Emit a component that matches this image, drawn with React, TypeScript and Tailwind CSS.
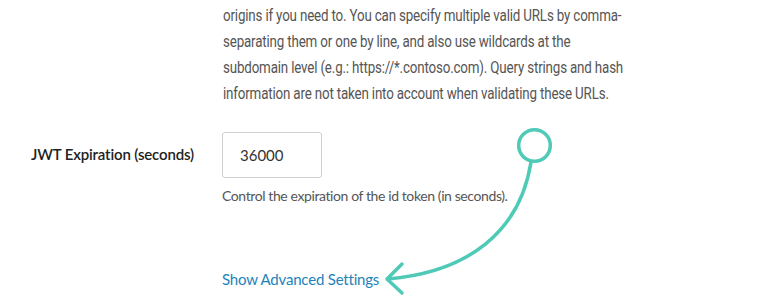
import React from "react";

export default function App() {
  return (
    <div className="relative w-[770px] h-[300px] overflow-hidden bg-white" style={{ fontFamily: "Lato, 'Liberation Sans', sans-serif" }}>
      <div className="pl-[223px] pt-[3px]">
        <p className="w-[560px] origin-left scale-x-[0.835] whitespace-nowrap text-[16px] leading-[26px] text-[#555] tracking-[-0.2px]" style={{ fontFamily: "Roboto, 'Liberation Sans', sans-serif" }}>
          origins if you need to. You can specify multiple valid URLs by comma-
          <br />
          separating them or one by line, and also use wildcards at the
          <br />
          subdomain level (e.g.: https://*.contoso.com). Query strings and hash
          <br />
          information are not taken into account when validating these URLs.
        </p>
      </div>
      <div className="flex mt-[25px]">
        <div className="w-[222px] pl-[31px] pt-[11px] text-[15px] font-semibold text-[#222] tracking-[-0.15px]">
          JWT Expiration (seconds)
        </div>
        <div className="flex flex-col">
          <div className="w-[100px] h-[46px] border border-[#d0d0d0] rounded-[3px] flex items-center pl-[17px] text-[15px] text-[#333]">
            36000
          </div>
          <div className="mt-[8px] text-[14px] text-[#555] leading-[20px] tracking-[-0.4px]">
            Control the expiration of the id token (in seconds).
          </div>
          <div className="mt-[63px] text-[15px] text-[#2283bb] leading-[20px] tracking-[-0.2px]">
            Show Advanced Settings
          </div>
        </div>
      </div>
      <svg className="absolute left-0 top-0" width="770" height="300" viewBox="0 0 770 300" fill="none">
        <circle cx="534.5" cy="145.5" r="15.8" stroke="#4ecab7" strokeWidth="3.5" />
        <path d="M531 162 C520 232 468 272 388 279" stroke="#4ecab7" strokeWidth="3.5" strokeLinecap="round" />
        <path d="M402 264 L387 279 L402 293" stroke="#4ecab7" strokeWidth="3.5" strokeLinecap="round" strokeLinejoin="round" />
      </svg>
    </div>
  );
}
